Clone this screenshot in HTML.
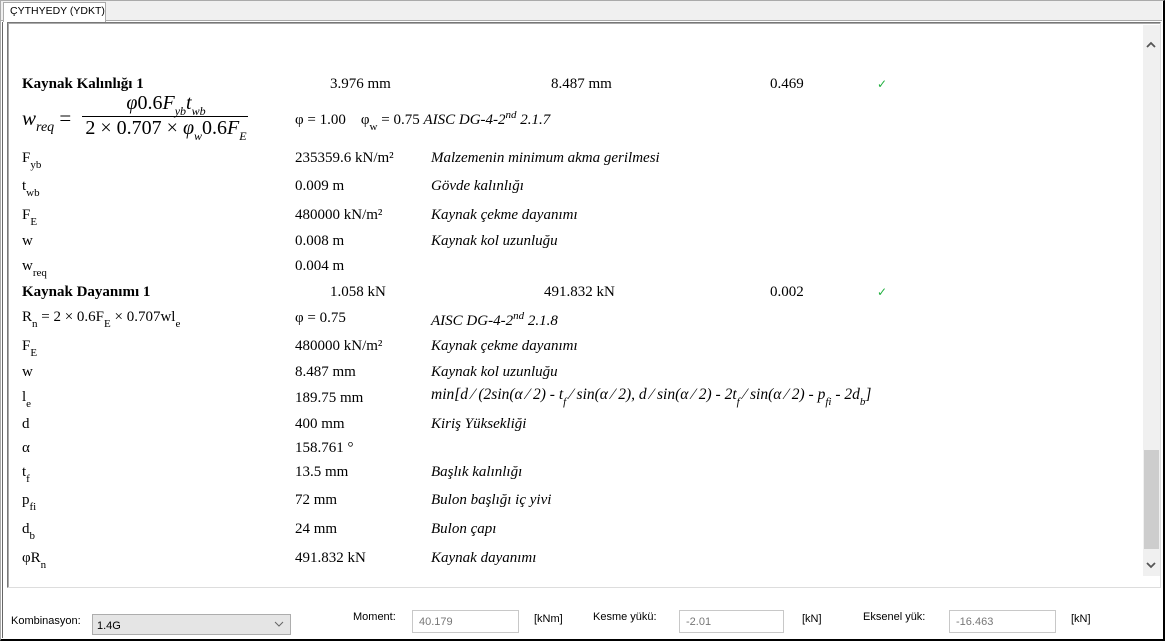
<!DOCTYPE html>
<html><head><meta charset="utf-8"><style>
*{margin:0;padding:0;box-sizing:border-box}
body{width:1165px;height:641px;background:#fff;position:relative;overflow:hidden;font-family:"Liberation Serif",serif;font-size:15px;color:#000}
.a{position:absolute;white-space:nowrap}
.s{font-family:"Liberation Sans",sans-serif;font-size:11px}
i{font-style:italic}
sub{font-size:11px;vertical-align:-6px}
sup{font-size:11px;vertical-align:6px}
.ck{color:#22b040;font-family:"DejaVu Sans",sans-serif;font-size:12px;font-weight:bold}
.box{position:absolute;height:23px;border:1px solid #c8c8c8;background:#fff;font-family:"Liberation Sans",sans-serif;font-size:11px;color:#777;padding:5px 0 0 6px}
#c{position:absolute;left:0;top:2px;width:1140px;height:580px}
</style></head><body>
<div class="a" style="left:0;top:0;width:1165px;height:641px;border-right:2px solid #000;border-bottom:2px solid #000;border-left:1px solid #aaa;border-top:1px solid #aaa"></div>
<div class="a" style="left:1px;top:1px;width:1161px;height:20px;background:#f0f0f0;border-bottom:1px solid #aaa"></div>
<div class="a" style="left:3px;top:2px;width:103px;height:20px;background:#fff;border:1px solid #aaa;border-bottom:none"></div>
<div class="a s" style="left:10px;top:5px;font-size:10.5px">ÇYTHYEDY (YDKT)</div>
<div class="a" style="left:2px;top:22px;width:1px;height:616px;background:#666"></div>
<div class="a" style="left:7px;top:22px;width:1154px;height:566px;border-top:1px solid #777;border-left:1px solid #777;border-right:1px solid #ddd;border-bottom:1px solid #ddd"></div>
<div class="a" style="left:8px;top:23px;width:1152px;height:1px;background:#aaa"></div>
<div class="a" style="left:8px;top:23px;width:1px;height:564px;background:#aaa"></div>
<div class="a" style="left:1143px;top:25px;width:17px;height:551px;background:#f0f0f0"></div>
<div class="a" style="left:1144px;top:450px;width:15px;height:99px;background:#cdcdcd"></div>
<svg class="a" style="left:1145px;top:40px" width="12" height="10"><path d="M2 7 L6 3 L10 7" fill="none" stroke="#555" stroke-width="1.8"/></svg>
<svg class="a" style="left:1145px;top:560px" width="12" height="10"><path d="M2 3 L6 7 L10 3" fill="none" stroke="#555" stroke-width="1.8"/></svg>

<div id="c">
<div class="a" style="left:22px;top:74px;font-weight:bold">Kaynak Kalınlığı 1</div>
<div class="a" style="left:330px;top:74px">3.976 mm</div>
<div class="a" style="left:551px;top:74px">8.487 mm</div>
<div class="a" style="left:770px;top:74px">0.469</div>
<div class="a ck" style="left:877px;top:75px">✓</div>

<div class="a" style="left:22px;top:104px;font-size:21px"><i>w<sub style="font-size:14px">req</sub></i> =</div>
<div class="a" style="left:82px;top:90px;width:168px;text-align:center;font-size:20px"><i>φ</i>0.6<i>F<sub style="font-size:12px">yb</sub>t<sub style="font-size:12px">wb</sub></i></div>
<div class="a" style="left:82px;top:114px;width:166px;height:1px;background:#000"></div>
<div class="a" style="left:81px;top:115px;width:170px;text-align:center;font-size:20px">2 × 0.707 × <i>φ<sub style="font-size:12px">w</sub></i>0.6<i>F<sub style="font-size:12px">E</sub></i></div>
<div class="a" style="left:295px;top:107px">φ = 1.00 &nbsp;&nbsp; φ<sub>w</sub> = 0.75 <i>AISC DG-4-2<sup>nd</sup> 2.1.7</i></div>

<div class="a" style="left:22px;top:148px">F<sub>yb</sub></div><div class="a" style="left:295px;top:148px">235359.6 kN/m²</div><div class="a" style="left:431px;top:148px"><i>Malzemenin minimum akma gerilmesi</i></div>
<div class="a" style="left:22px;top:176px">t<sub>wb</sub></div><div class="a" style="left:295px;top:176px">0.009 m</div><div class="a" style="left:431px;top:176px"><i>Gövde kalınlığı</i></div>
<div class="a" style="left:22px;top:205px">F<sub>E</sub></div><div class="a" style="left:295px;top:205px">480000 kN/m²</div><div class="a" style="left:431px;top:205px"><i>Kaynak çekme dayanımı</i></div>
<div class="a" style="left:22px;top:231px">w</div><div class="a" style="left:295px;top:231px">0.008 m</div><div class="a" style="left:431px;top:231px"><i>Kaynak kol uzunluğu</i></div>
<div class="a" style="left:22px;top:256px">w<sub>req</sub></div><div class="a" style="left:295px;top:256px">0.004 m</div>

<div class="a" style="left:22px;top:282px;font-weight:bold">Kaynak Dayanımı 1</div>
<div class="a" style="left:330px;top:282px">1.058 kN</div>
<div class="a" style="left:544px;top:282px">491.832 kN</div>
<div class="a" style="left:770px;top:282px">0.002</div>
<div class="a ck" style="left:877px;top:283px">✓</div>

<div class="a" style="left:22px;top:307px">R<sub>n</sub> = 2 × 0.6F<sub>E</sub> × 0.707wl<sub>e</sub></div><div class="a" style="left:295px;top:308px">φ = 0.75</div><div class="a" style="left:431px;top:308px"><i>AISC DG-4-2<sup>nd</sup> 2.1.8</i></div>
<div class="a" style="left:22px;top:336px">F<sub>E</sub></div><div class="a" style="left:295px;top:336px">480000 kN/m²</div><div class="a" style="left:431px;top:336px"><i>Kaynak çekme dayanımı</i></div>
<div class="a" style="left:22px;top:362px">w</div><div class="a" style="left:295px;top:362px">8.487 mm</div><div class="a" style="left:431px;top:362px"><i>Kaynak kol uzunluğu</i></div>
<div class="a" style="left:22px;top:387px">l<sub>e</sub></div><div class="a" style="left:295px;top:388px">189.75 mm</div><div class="a" style="left:431px;top:384px;font-size:15.5px"><i>min[d ⁄ (2sin(α ⁄ 2) - t<sub>f</sub> ⁄ sin(α ⁄ 2), d ⁄ sin(α ⁄ 2) - 2t<sub>f</sub> ⁄ sin(α ⁄ 2) - p<sub>fi</sub> - 2d<sub>b</sub>]</i></div>
<div class="a" style="left:22px;top:414px">d</div><div class="a" style="left:295px;top:414px">400 mm</div><div class="a" style="left:431px;top:414px"><i>Kiriş Yüksekliği</i></div>
<div class="a" style="left:22px;top:438px">α</div><div class="a" style="left:295px;top:438px">158.761 °</div>
<div class="a" style="left:22px;top:462px">t<sub>f</sub></div><div class="a" style="left:295px;top:462px">13.5 mm</div><div class="a" style="left:431px;top:462px"><i>Başlık kalınlığı</i></div>
<div class="a" style="left:22px;top:490px">p<sub>fi</sub></div><div class="a" style="left:295px;top:490px">72 mm</div><div class="a" style="left:431px;top:490px"><i>Bulon başlığı iç yivi</i></div>
<div class="a" style="left:22px;top:519px">d<sub>b</sub></div><div class="a" style="left:295px;top:519px">24 mm</div><div class="a" style="left:431px;top:519px"><i>Bulon çapı</i></div>
<div class="a" style="left:22px;top:548px">φR<sub>n</sub></div><div class="a" style="left:295px;top:548px">491.832 kN</div><div class="a" style="left:431px;top:548px"><i>Kaynak dayanımı</i></div>
</div>

<div class="a s" style="left:11px;top:615px">Kombinasyon:</div>
<div class="a" style="left:92px;top:614px;width:199px;height:21px;background:#e5e5e5;border:1px solid #adadad"></div>
<div class="a s" style="left:97px;top:620px;color:#000">1.4G</div>
<svg class="a" style="left:274px;top:620px" width="10" height="8"><path d="M1 2 L5 6 L9 2" fill="none" stroke="#666" stroke-width="1"/></svg>
<div class="a s" style="left:353px;top:611px">Moment:</div>
<div class="box" style="left:412px;top:610px;width:107px">40.179</div>
<div class="a s" style="left:534px;top:613px">[kNm]</div>
<div class="a s" style="left:593px;top:611px">Kesme yükü:</div>
<div class="box" style="left:679px;top:610px;width:105px">-2.01</div>
<div class="a s" style="left:802px;top:613px">[kN]</div>
<div class="a s" style="left:863px;top:611px">Eksenel yük:</div>
<div class="box" style="left:949px;top:610px;width:107px">-16.463</div>
<div class="a s" style="left:1071px;top:613px">[kN]</div>
</body></html>
